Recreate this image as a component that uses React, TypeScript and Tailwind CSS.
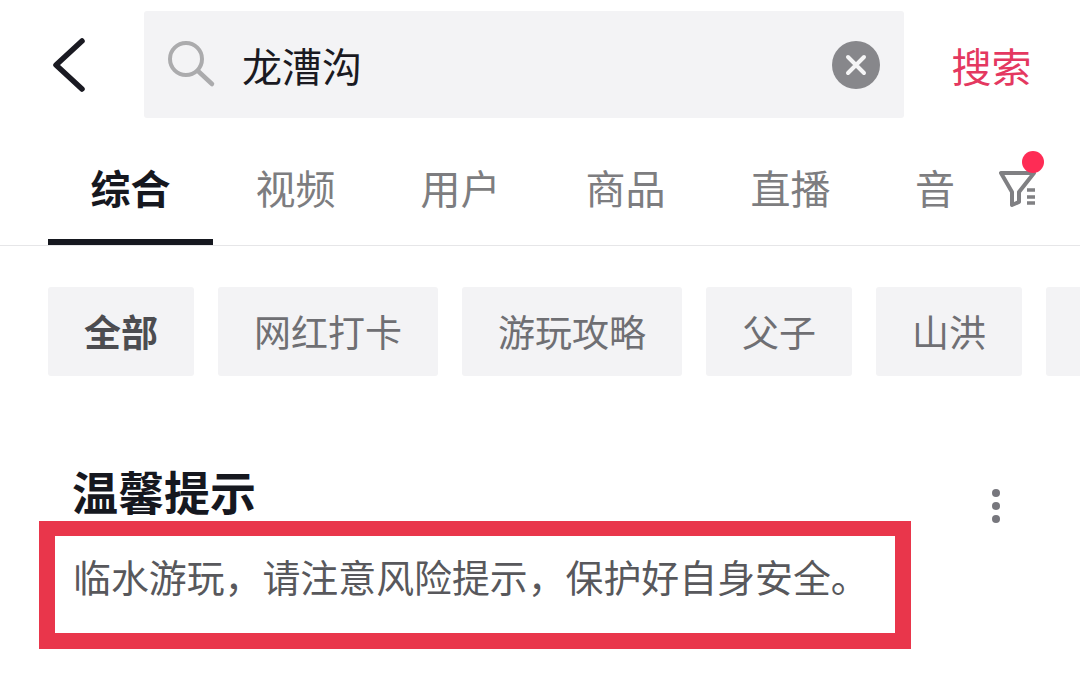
const tabs = ["综合", "视频", "用户", "商品", "直播"];
const chips = [
  { label: "全部", width: "w-[146px]", active: true },
  { label: "网红打卡", width: "w-[220px]", active: false },
  { label: "游玩攻略", width: "w-[220px]", active: false },
  { label: "父子", width: "w-[146px]", active: false },
  { label: "山洪", width: "w-[146px]", active: false },
];

const cjkFont = "font-['Noto_Sans_CJK_SC','Noto_Sans',sans-serif]";

export default function App() {
  return (
    <div className={`flex flex-col w-[1080px] h-[676px] overflow-hidden bg-white ${cjkFont}`}>
      {/* Search bar */}
      <div className="flex items-start h-[118px] pt-[11px] shrink-0">
        <div className="flex w-[144px] h-[107px] shrink-0 items-center">
          <svg width="144" height="107" viewBox="0 0 144 107" fill="none">
            <path d="M82 30 L56 54 L82 78" stroke="#1a1a22" strokeWidth="5.5" strokeLinecap="round" strokeLinejoin="round" />
          </svg>
        </div>
        <div className="flex items-center w-[760px] h-[107px] shrink-0 rounded-[3px] bg-[#f3f3f5]">
          <svg className="ml-[24px] shrink-0" width="48" height="54" viewBox="0 0 48 54" fill="none">
            <circle cx="18" cy="21" r="16" stroke="#ababad" strokeWidth="4" />
            <path d="M30 33 L44 46" stroke="#ababad" strokeWidth="4.5" strokeLinecap="round" />
          </svg>
          <span className="ml-[26px] text-[40px] leading-none text-[#1a1a22] flex-1">龙漕沟</span>
          <div className="flex items-center justify-center w-[48px] h-[48px] mr-[24px] rounded-full bg-[#87878b]">
            <svg width="22" height="22" viewBox="0 0 22 22" fill="none">
              <path d="M3 3 L19 19 M19 3 L3 19" stroke="#f5f5f6" strokeWidth="4" strokeLinecap="round" />
            </svg>
          </div>
        </div>
        <div className="flex flex-1 h-[107px] items-center justify-center text-[40px] leading-none text-[#e43860] pr-[1px]">
          搜索
        </div>
      </div>

      {/* Tabs */}
      <div className="relative flex h-[128px] shrink-0 pl-[48px] border-b border-[#e6e6e8]">
        {tabs.map((tab, index) => (
          <div
            key={tab}
            className={
              index === 0
                ? "flex items-center justify-center w-[165px] pt-[17px] border-b-[6px] border-[#16181f] text-[40px] font-bold text-[#16181f]"
                : "flex items-center justify-center w-[165px] pt-[11px] text-[40px] text-[#7d7d80]"
            }
          >
            {tab}
          </div>
        ))}
        <div className="flex items-center ml-[42px] pt-[11px] text-[40px] text-[#7d7d80]">音</div>
        <div className="absolute left-[998px] top-[29px] w-[48px] h-[62px]">
          <svg width="48" height="62" viewBox="0 0 48 62" fill="none">
            <path d="M3 26 L36 26 L21 45 L21 55 L14 58 L14 45 Z" stroke="#808083" strokeWidth="4" strokeLinejoin="round" />
            <path d="M29 43 H37 M29 50 H37 M29 56 H37" stroke="#808083" strokeWidth="3.5" />
            <circle cx="35" cy="15" r="11" fill="#fe2c55" />
          </svg>
        </div>
      </div>

      {/* Filter chips */}
      <div className="flex gap-[24px] h-[89px] mt-[41px] pl-[48px] shrink-0">
        {chips.map((chip) => (
          <div
            key={chip.label}
            className={`flex items-center justify-center shrink-0 rounded-[3px] bg-[#f3f3f5] text-[37px] ${chip.width} ${
              chip.active ? "font-bold text-[#4c4c50]" : "text-[#6f6f73]"
            }`}
          >
            {chip.label}
          </div>
        ))}
        <div className="w-[60px] shrink-0 rounded-[3px] bg-[#f3f3f5]" />
      </div>

      {/* Notice */}
      <div className="flex items-start justify-between h-[57px] mt-[88px] pl-[72px] pr-[80px] shrink-0">
        <div className="text-[46px] leading-[53px] font-bold text-[#16181f]">温馨提示</div>
        <div className="flex flex-col gap-[5px] mt-[25px]">
          <div className="w-[8px] h-[8px] rounded-full bg-[#77777d]" />
          <div className="w-[8px] h-[8px] rounded-full bg-[#77777d]" />
          <div className="w-[8px] h-[8px] rounded-full bg-[#77777d]" />
        </div>
      </div>
      <div className="flex items-start w-[872px] h-[128px] ml-[39px] shrink-0 border-[16px] border-t-[15px] border-[#e9364b] pl-[18px] pt-[12px] bg-white">
        <span className="text-[37.9px] leading-[56px] whitespace-nowrap text-[#58585c]">
          临水游玩，请注意风险提示，保护好自身安全。
        </span>
      </div>
    </div>
  );
}
